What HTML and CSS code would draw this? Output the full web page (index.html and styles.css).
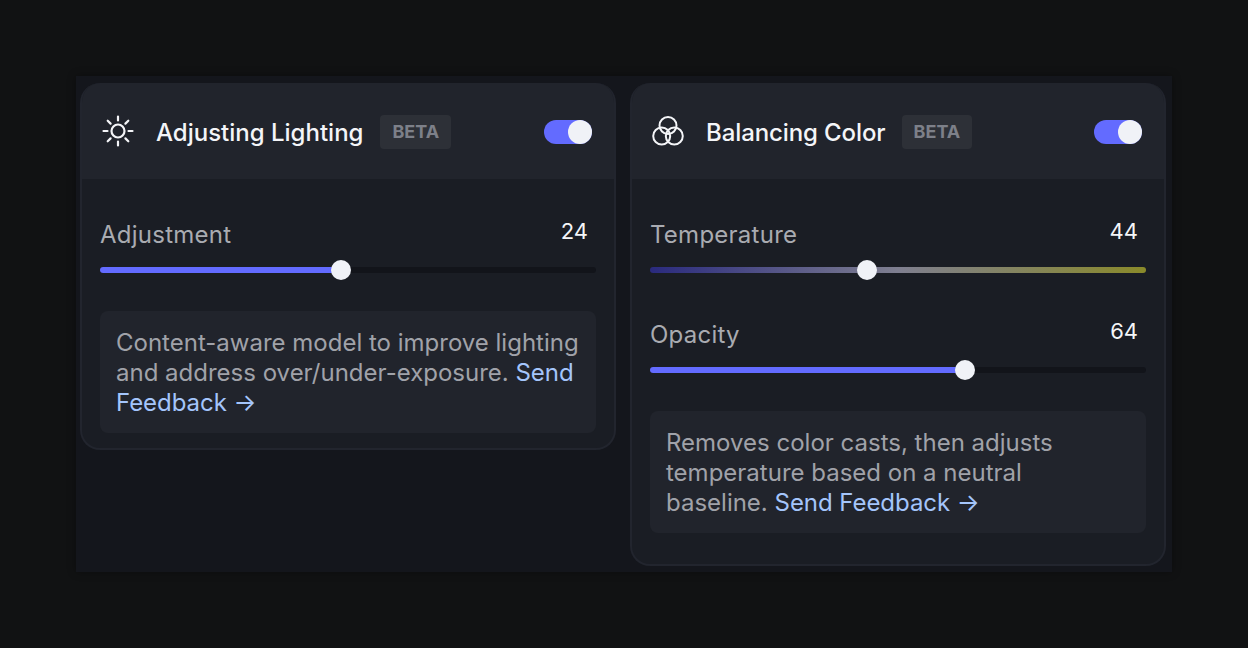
FILE: index.html
```html
<!DOCTYPE html>
<html lang="en">
<head>
<meta charset="utf-8">
<title>Adjustments</title>
<link rel="stylesheet" href="styles.css">
</head>
<body>
<main class="panel">
  <section class="card">
    <header class="card-head">
      <svg class="icon" viewBox="0 0 32 32" fill="none" stroke="currentColor" stroke-width="2.200" stroke-linecap="round"><circle cx="16" cy="16" r="6.500"/><path d="M16 1.500v4M16 26.500v4M1.500 16h4M26.500 16h4M5.700 5.700l2.900 2.900M23.400 23.400l2.900 2.900M5.700 26.300l2.900-2.900M23.400 8.600l2.900-2.900"/></svg>
      <h2 class="title">Adjusting Lighting</h2>
      <span class="badge">BETA</span>
      <span class="toggle"><span class="knob"></span></span>
    </header>
    <div class="card-body">
      <div class="control">
        <div class="control-top"><span class="label">Adjustment</span><span class="value">24</span></div>
        <div class="track"><div class="fill" style="width:48.6%"></div><span class="thumb" style="left:48.6%"></span></div>
      </div>
      <p class="note">Content-aware model to improve lighting and address over/under-exposure. <a href="#">Send Feedback →</a></p>
    </div>
  </section>
  <section class="card">
    <header class="card-head">
      <svg class="icon" viewBox="0 0 32 32" fill="none" stroke="currentColor" stroke-width="2"><circle cx="16" cy="10.500" r="8.500"/><circle cx="9.700" cy="21" r="8.500"/><circle cx="22.300" cy="21" r="8.500"/></svg>
      <h2 class="title title-tight">Balancing Color</h2>
      <span class="badge">BETA</span>
      <span class="toggle"><span class="knob"></span></span>
    </header>
    <div class="card-body card-body-tall">
      <div class="control">
        <div class="control-top"><span class="label">Temperature</span><span class="value">44</span></div>
        <div class="track track-temp"><span class="thumb" style="left:43.8%"></span></div>
      </div>
      <div class="control">
        <div class="control-top"><span class="label">Opacity</span><span class="value">64</span></div>
        <div class="track"><div class="fill" style="width:63.5%"></div><span class="thumb" style="left:63.5%"></span></div>
      </div>
      <p class="note">Removes color casts, then adjusts temperature based on a neutral baseline. <a href="#">Send Feedback →</a></p>
    </div>
  </section>
</main>
</body>
</html>
```
FILE: styles.css
```css
* { box-sizing: border-box; }
html, body { margin: 0; height: 100%; }
body {
  background: #111213;
  font-family: Inter, "Liberation Sans", sans-serif;
  padding: 76px;
  height: 648px;
  overflow: hidden;
}
.panel {
  width: 1096px;
  height: 496px;
  background: #14161c;
  box-shadow: 0 0 8px rgba(0, 0, 0, 0.35);
  padding: 7px 6px 0 4px;
  display: grid;
  grid-template-columns: 536px 536px;
  column-gap: 14px;
  align-items: start;
}
.card {
  background: #1a1d24;
  border: 2px solid #22252e;
  border-top: 0;
  border-radius: 20px;
  overflow: hidden;
}
.card-head {
  height: 96px;
  margin: 0 -1px;
  background: #21242c;
  display: flex;
  align-items: center;
  padding: 2px 23px 0 21px;
  color: #f4f5f8;
}
.icon { width: 32px; height: 32px; flex: none; margin-top: -2px; }
.title {
  margin: 0 17px 0 22px;
  padding-top: 2px;
  font-size: 24px;
  font-weight: 450;
  line-height: 32px;
  color: #f4f5f8;
}
.title-tight { letter-spacing: -0.1px; margin-right: 16px; }
.badge {
  height: 34px;
  line-height: 34px;
  padding: 0 12px;
  background: #2d3037;
  border-radius: 4px;
  color: #7d8089;
  font-size: 18px;
  font-weight: 700;
}
.toggle {
  margin-left: auto;
  width: 48px;
  height: 24px;
  border-radius: 12px;
  background: #636bff;
  display: flex;
  justify-content: flex-end;
}
.knob {
  width: 24px;
  height: 24px;
  border-radius: 50%;
  background: #f0f2f7;
}
.card-body { padding: 36px 18px 15px; }
.card-body-tall { padding-bottom: 31px; }
.control { margin-bottom: 42px; }
.control:last-of-type { margin-bottom: 38px; }
.control-top {
  display: flex;
  justify-content: space-between;
  align-items: flex-start;
  padding-right: 8px;
  height: 52px;
}
.label {
  font-size: 24px;
  line-height: 40px;
  letter-spacing: 0.25px;
  color: #a9abb1;
}
.value {
  font-size: 22px;
  line-height: 32px;
  font-weight: 400;
  color: #f4f5f8;
}
.track {
  position: relative;
  height: 6px;
  border-radius: 3px;
  background: #12141a;
}
.track-temp { background: linear-gradient(90deg, #2a2a7e 0%, #7f7f90 50%, #8a8a2a 100%); }
.fill {
  height: 100%;
  border-radius: 3px;
  background: #636bff;
}
.thumb {
  position: absolute;
  top: 50%;
  width: 20px;
  height: 20px;
  margin: -10px 0 0 -10px;
  border-radius: 50%;
  background: #f0f2f7;
}
.note {
  margin: 0;
  padding: 17px 16px 15px;
  background: #21242c;
  border-radius: 8px;
  font-size: 24px;
  line-height: 30px;
  color: #a0a2a9;
}
.note a { color: #a4c5fb; text-decoration: none; letter-spacing: -0.05px; }
```
